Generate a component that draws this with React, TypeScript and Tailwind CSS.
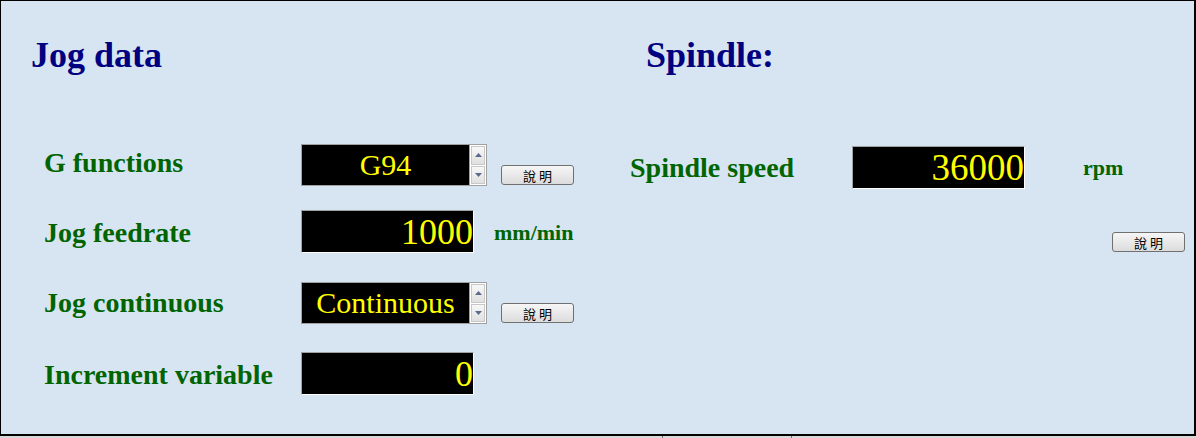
import React from 'react';

const serif = { fontFamily: '"Liberation Serif", "Times New Roman", serif' };

const HelpButton = ({ className = '' }: { className?: string }) => (
	<button
		className={`w-[73px] h-[20px] rounded-[3px] border border-[#707070] bg-gradient-to-b from-[#f6f6f6] to-[#dcdcdc] text-[13px] leading-none text-black tracking-[3px] pl-[3px] font-['Noto_Sans_CJK_TC',sans-serif] ${className}`}
	>
		說明
	</button>
);

const Spinner = () => (
	<div className="flex flex-col w-[17px] h-full border-l border-[#a0a0a0] bg-white p-[1px] gap-[1px]">
		<div className="flex-1 flex items-center justify-center bg-gradient-to-b from-[#f8f8f8] to-[#e0e0e0] border border-[#c8c8c8]">
			<svg width="7" height="4" viewBox="0 0 7 4">
				<path d="M0 4 L3.5 0 L7 4 Z" fill="#5a6a8a" />
			</svg>
		</div>
		<div className="flex-1 flex items-center justify-center bg-gradient-to-b from-[#f8f8f8] to-[#e0e0e0] border border-[#c8c8c8]">
			<svg width="7" height="4" viewBox="0 0 7 4">
				<path d="M0 0 L3.5 4 L7 0 Z" fill="#5a6a8a" />
			</svg>
		</div>
	</div>
);

const SpinField = ({ value }: { value: string }) => (
	<div className="flex w-[186px] h-[42px] bg-black border border-[#a0a0a0]">
		<div className="flex-1 flex items-center justify-center text-[30px] leading-none text-[#ffff00]">
			{value}
		</div>
		<Spinner />
	</div>
);

const NumField = ({ value, big = false }: { value: string; big?: boolean }) => (
	<div
		className={`flex items-center justify-end w-[173px] h-[43px] bg-black border border-[#a0a0a0] border-r-white border-b-white leading-none text-[#ffff00] ${
			big ? 'text-[37px]' : 'text-[36px]'
		}`}
	>
		{value}
	</div>
);

const Label = ({
	children,
	className,
}: {
	children: React.ReactNode;
	className: string;
}) => (
	<div className={`${className} text-[28px] font-bold leading-none text-[#006400]`}>{children}</div>
);

const Unit = ({ children }: { children: React.ReactNode }) => (
	<div className="text-[22px] font-bold leading-none text-[#006400]">{children}</div>
);

export default function App() {
	return (
		<div className="w-[1196px] h-[438px] bg-white" style={serif}>
			<div className="flex h-[436px] bg-[#d7e4f2] border-l border-t border-r-2 border-b-2 border-black">
				<section className="w-[600px]">
					<h1 className="ml-[30px] mt-[36px] text-[36px] font-bold leading-none text-[#000080]">
						Jog data
					</h1>
					<div className="ml-[43px] mt-[71px] flex flex-col">
						<div className="flex items-center h-[42px]">
							<Label className="w-[257px] mb-1">G functions</Label>
							<SpinField value="G94" />
							<HelpButton className="ml-[14px] self-end mb-[1px]" />
						</div>
						<div className="flex items-center h-[43px] mt-[24px]">
							<Label className="w-[257px] mt-[2px]">Jog feedrate</Label>
							<NumField value="1000" />
							<div className="ml-[20px] mt-[2px]">
								<Unit>mm/min</Unit>
							</div>
						</div>
						<div className="flex items-center h-[42px] mt-[29px]">
							<Label className="w-[257px]">Jog continuous</Label>
							<SpinField value="Continuous" />
							<HelpButton className="ml-[14px] self-end mb-[1px]" />
						</div>
						<div className="flex items-center h-[43px] mt-[28px]">
							<Label className="w-[257px] mt-[3px]">Increment variable</Label>
							<NumField value="0" />
						</div>
					</div>
				</section>
				<section className="flex-1">
					<h1 className="ml-[45px] mt-[36px] text-[36px] font-bold leading-none text-[#000080]">
						Spindle:
					</h1>
					<div className="ml-[29px] mt-[73px] flex items-center h-[43px]">
						<Label className="w-[222px]">Spindle speed</Label>
						<NumField value="36000" big />
						<div className="ml-[58px]">
							<Unit>rpm</Unit>
						</div>
					</div>
					<div className="flex justify-end mt-[43px] mr-[9px]">
						<HelpButton />
					</div>
				</section>
			</div>
			<div className="relative h-[2px] bg-[#d8d8d8]">
				<div className="absolute left-[662px] top-0 w-px h-[2px] bg-[#707070]" />
				<div className="absolute left-[791px] top-0 w-px h-[2px] bg-[#707070]" />
			</div>
		</div>
	);
}
